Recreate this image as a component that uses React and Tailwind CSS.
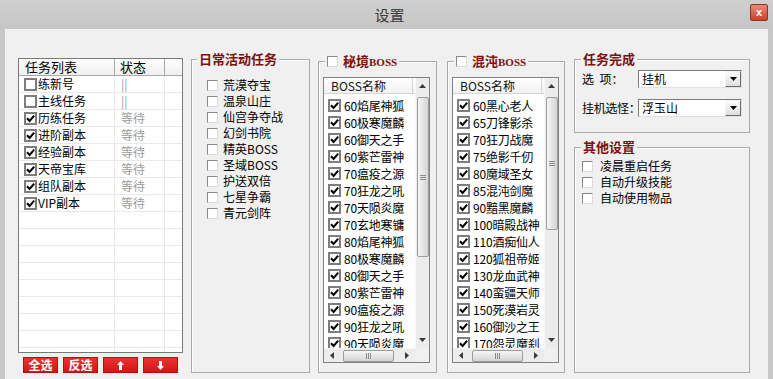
import React from "react";

const tasks = [
  ["练新号", false, "||"],
  ["主线任务", false, "||"],
  ["历练任务", true, "等待"],
  ["进阶副本", true, "等待"],
  ["经验副本", true, "等待"],
  ["天帝宝库", true, "等待"],
  ["组队副本", true, "等待"],
  ["VIP副本", true, "等待"],
];

const daily = ["荒漠夺宝", "温泉山庄", "仙宫争夺战", "幻剑书院", "精英BOSS", "圣域BOSS", "护送双倍", "七星争霸", "青元剑阵"];

const secret = [
  "60焰尾神狐", "60极寒魔麟", "60御天之手", "60紫芒雷神", "70瘟疫之源", "70狂龙之吼", "70天陨炎魔", "70玄地寒镛",
  "80焰尾神狐", "80极寒魔麟", "80御天之手", "80紫芒雷神", "90瘟疫之源", "90狂龙之吼", "90天陨炎魔",
];

const chaos = [
  "60黑心老人", "65刀锋影杀", "70狂刀战魔", "75绝影千仞", "80魔域圣女", "85混沌剑魔", "90黯黑魔麟", "100暗殿战神",
  "110酒痴仙人", "120狐祖帝姬", "130龙血武神", "140蛮疆天师", "150死漠岩灵", "160御沙之王", "170怨灵魔刹",
];

function ListBox({ checked }) {
  return (
    <span className="w-[13px] h-[13px] shrink-0 border-2 border-[#7d7d7d] bg-white flex items-center justify-center">
      {checked && (
        <svg width="9" height="9" viewBox="0 0 9 9">
          <path d="M1 4.3 L3.6 7 L8.2 1.6" fill="none" stroke="#000" strokeWidth="2" />
        </svg>
      )}
    </span>
  );
}

function FlatBox() {
  return (
    <span className="w-[11px] h-[11px] shrink-0 bg-white border border-t-[#8a8a8a] border-l-[#8a8a8a] border-r-[#dcdcdc] border-b-[#dcdcdc]" />
  );
}

function GroupBox({ title, className, titleLeft, children }) {
  return (
    <div className={`relative border border-[#a9a9a9] shadow-[inset_1px_1px_0_#ffffff] ${className}`}>
      <div className={`absolute top-[-9px] ${titleLeft} px-[2px] h-[16px] bg-[#f0f0f0] flex items-center`}>{title}</div>
      {children}
    </div>
  );
}

function Title({ children }) {
  return <span className="text-[13px] font-bold leading-[16px] text-[#7f0f0f]">{children}</span>;
}

function UpTri() {
  return (
    <svg width="7" height="4" viewBox="0 0 7 4">
      <path d="M3.5 0 L7 4 L0 4 Z" fill="#3a3a3a" />
    </svg>
  );
}
function DownTri() {
  return (
    <svg width="7" height="4" viewBox="0 0 7 4">
      <path d="M0 0 L7 0 L3.5 4 Z" fill="#3a3a3a" />
    </svg>
  );
}
function LeftTri() {
  return (
    <svg width="4" height="7" viewBox="0 0 4 7">
      <path d="M0 3.5 L4 0 L4 7 Z" fill="#3a3a3a" />
    </svg>
  );
}
function RightTri() {
  return (
    <svg width="4" height="7" viewBox="0 0 4 7">
      <path d="M4 3.5 L0 0 L0 7 Z" fill="#3a3a3a" />
    </svg>
  );
}

function VScroll({ thumbClass }) {
  return (
    <div className="w-[14px] h-full bg-[#ececec] flex flex-col border-l border-[#f7f7f7]">
      <div className="h-[16px] shrink-0 flex items-center justify-center">
        <UpTri />
      </div>
      <div className="flex-1 flex flex-col items-center">
        <div
          className={`mt-[3px] w-[12px] rounded-[2px] border border-[#9c9c9c] bg-gradient-to-r from-[#f6f6f6] to-[#d4d4d4] flex items-center justify-center ${thumbClass}`}
        >
          <svg width="6" height="5" viewBox="0 0 6 5">
            <path d="M0 0.5 H6 M0 2.5 H6 M0 4.5 H6" stroke="#8a8a8a" strokeWidth="1" />
          </svg>
        </div>
      </div>
      <div className="h-[16px] shrink-0 flex items-center justify-center">
        <DownTri />
      </div>
    </div>
  );
}

function HScroll() {
  return (
    <div className="flex h-[14px] shrink-0">
      <div className="w-[91px] flex bg-[#ececec] border-t border-[#f7f7f7]">
        <div className="w-[16px] flex items-center justify-center">
          <LeftTri />
        </div>
        <div className="flex-1 flex items-center">
          <div className="ml-[3px] w-[51px] h-[12px] rounded-[2px] border border-[#9c9c9c] bg-gradient-to-b from-[#f6f6f6] to-[#d4d4d4] flex items-center justify-center">
            <svg width="5" height="6" viewBox="0 0 5 6">
              <path d="M0.5 0 V6 M2.5 0 V6 M4.5 0 V6" stroke="#8a8a8a" strokeWidth="1" />
            </svg>
          </div>
        </div>
        <div className="w-[16px] flex items-center justify-center">
          <RightTri />
        </div>
      </div>
      <div className="flex-1 bg-[#f0f0f0]" />
    </div>
  );
}

function BossList({ items, thumbClass }) {
  return (
    <div className="ml-[4px] mt-[15px] w-[107px] h-[286px] border border-[#828282] bg-white flex flex-col">
      <div className="flex h-[270px]">
        <div className="w-[91px] overflow-hidden flex flex-col">
          <div className="h-[16px] shrink-0 border-b border-[#d5d5d5] bg-gradient-to-b from-white to-[#f1f1f1] flex">
            <div className="w-[89px] border-r border-[#d5d5d5] pl-[7px] text-[12px] leading-[15px] text-[#111]">BOSS名称</div>
          </div>
          <div className="pt-[3px] flex flex-col">
            {items.map((n) => (
              <div key={n} className="h-[17px] shrink-0 flex items-center pl-[4px] whitespace-nowrap">
                <ListBox checked />
                <span className="ml-[3px] text-[12px] leading-[16px] tracking-[-0.2px]">{n}</span>
              </div>
            ))}
          </div>
        </div>
        <VScroll thumbClass={thumbClass} />
      </div>
      <HScroll />
    </div>
  );
}

function Select({ value }) {
  return (
    <div className="w-[104px] h-[18px] bg-white border border-t-[#7a7a7a] border-l-[#7a7a7a] border-r-[#e2e2e2] border-b-[#e2e2e2] flex items-center">
      <span className="flex-1 pl-[3px] text-[12px] leading-[16px]">{value}</span>
      <span className="w-[16px] h-[16px] bg-gradient-to-b from-[#fbfbfb] to-[#dedede] border border-t-[#f5f5f5] border-l-[#f5f5f5] border-r-[#6d6d6d] border-b-[#6d6d6d] flex items-center justify-center">
        <svg width="7" height="4" viewBox="0 0 7 4">
          <path d="M0 0 L7 0 L3.5 4 Z" fill="#000" />
        </svg>
      </span>
    </div>
  );
}

function RedBtn({ children }) {
  return (
    <div className="w-[35px] h-[16px] bg-gradient-to-b from-[#ee3030] to-[#d01616] border border-[#b31010] text-white font-bold text-[12px] leading-none flex items-center justify-center">
      {children}
    </div>
  );
}

export default function App() {
  const rows = Array.from({ length: 17 }, (_, i) => tasks[i]);
  return (
    <div className="w-[773px] h-[379px] bg-[#c8c8c8] overflow-hidden flex flex-col font-['Noto_Sans_CJK_SC','Noto_Sans',sans-serif] text-black">
      {/* title bar */}
      <div className="relative h-[29px] shrink-0 flex items-center justify-center bg-gradient-to-b from-[#cfcfcf] to-[#c6c6c6]">
        <span className="ml-[6px] text-[15px] text-[#3c3c3c] leading-none">设置</span>
        <div className="absolute right-[5px] top-[4px] w-[18px] h-[17px] rounded-[2px] border border-[#8c3325] bg-gradient-to-b from-[#e88a78] to-[#c8402a] flex items-center justify-center">
          <span className="text-white font-bold text-[11px] leading-none font-['Liberation_Sans',sans-serif]">x</span>
        </div>
      </div>

      {/* content */}
      <div className="flex-1 mx-[5px] bg-[#f0f0f0] flex items-start pl-[13px]">
        {/* left task list */}
        <div className="mt-[29px] flex flex-col">
          <div className="w-[165px] h-[295px] border border-[#7a7a7a] bg-white overflow-hidden flex flex-col">
            <div className="h-[17px] shrink-0 flex border-b border-[#a8a8a8] bg-gradient-to-b from-white to-[#efefef] text-[13px] leading-[16px]">
              <div className="w-[96px] pl-[6px] border-r border-[#a8a8a8]">任务列表</div>
              <div className="w-[50px] pl-[5px] border-r border-[#a8a8a8]">状态</div>
              <div className="flex-1" />
            </div>
            {rows.map((t, i) => (
              <div key={i} className="h-[17px] shrink-0 flex border-b border-[#e9e9e9]">
                <div className="w-[96px] border-r border-[#e9e9e9] pl-[5px] flex items-center">
                  {t && (
                    <>
                      <ListBox checked={t[1]} />
                      <span className="ml-[1px] text-[12px] leading-[16px]">{t[0]}</span>
                    </>
                  )}
                </div>
                <div className="w-[50px] border-r border-[#e9e9e9] pl-[6px] flex items-center text-[12px] leading-[16px] text-[#9c9c9c]">
                  {t && t[2]}
                </div>
                <div className="flex-1" />
              </div>
            ))}
          </div>
          <div className="mt-[4px] pl-[5px] flex gap-[5px]">
            <RedBtn>全选</RedBtn>
            <RedBtn>反选</RedBtn>
            <RedBtn>
              <svg width="7" height="9" viewBox="0 0 7 9">
                <path d="M3.5 0 L7 4 L5 4 L5 9 L2 9 L2 4 L0 4 Z" fill="#fff" />
              </svg>
            </RedBtn>
            <RedBtn>
              <svg width="7" height="9" viewBox="0 0 7 9">
                <path d="M3.5 9 L7 5 L5 5 L5 0 L2 0 L2 5 L0 5 Z" fill="#fff" />
              </svg>
            </RedBtn>
          </div>
        </div>

        {/* daily */}
        <GroupBox className="ml-[8px] mt-[30px] w-[119px] h-[314px]" titleLeft="left-[5px]" title={<Title>日常活动任务</Title>}>
          <div className="pt-[17px] pl-[15px] flex flex-col">
            {daily.map((d) => (
              <div key={d} className="h-[16px] flex items-center">
                <FlatBox />
                <span className="ml-[5px] text-[12px] leading-[16px]">{d}</span>
              </div>
            ))}
          </div>
        </GroupBox>

        {/* secret boss */}
        <GroupBox
          className="ml-[8px] mt-[32px] w-[119px] h-[312px]"
          titleLeft="left-[6px]"
          title={
            <span className="flex items-center">
              <FlatBox />
              <span className="ml-[5px] text-[13px] font-bold leading-[16px] text-[#7f0f0f]">
                秘境<span className="font-['Liberation_Serif',serif] text-[11px]">BOSS</span>
              </span>
            </span>
          }
        >
          <BossList items={secret} thumbClass="h-[160px]" />
        </GroupBox>

        {/* chaos boss */}
        <GroupBox
          className="ml-[10px] mt-[32px] w-[118px] h-[312px]"
          titleLeft="left-[6px]"
          title={
            <span className="flex items-center">
              <FlatBox />
              <span className="ml-[5px] text-[13px] font-bold leading-[16px] text-[#7f0f0f]">
                混沌<span className="font-['Liberation_Serif',serif] text-[11px]">BOSS</span>
              </span>
            </span>
          }
        >
          <BossList items={chaos} thumbClass="h-[133px]" />
        </GroupBox>

        {/* right column */}
        <div className="ml-[9px] mt-[30px] w-[176px] flex flex-col">
          <GroupBox className="h-[74px]" titleLeft="left-[6px]" title={<Title>任务完成</Title>}>
            <div className="pt-[10px] pl-[7px] flex flex-col">
              <div className="flex items-center">
                <span className="w-[56px] text-[12px] leading-[16px] whitespace-pre">选  项：</span>
                <Select value="挂机" />
              </div>
              <div className="mt-[11px] flex items-center">
                <span className="w-[56px] text-[12px] leading-[16px] whitespace-nowrap tracking-[-0.3px]">挂机选怪：</span>
                <Select value="浮玉山" />
              </div>
            </div>
          </GroupBox>
          <GroupBox className="mt-[14px] h-[226px]" titleLeft="left-[6px]" title={<Title>其他设置</Title>}>
            <div className="pt-[10px] pl-[7px] flex flex-col">
              {["凌晨重启任务", "自动升级技能", "自动使用物品"].map((d) => (
                <div key={d} className="h-[16px] flex items-center">
                  <FlatBox />
                  <span className="ml-[7px] text-[12px] leading-[16px]">{d}</span>
                </div>
              ))}
            </div>
          </GroupBox>
        </div>
      </div>
    </div>
  );
}
